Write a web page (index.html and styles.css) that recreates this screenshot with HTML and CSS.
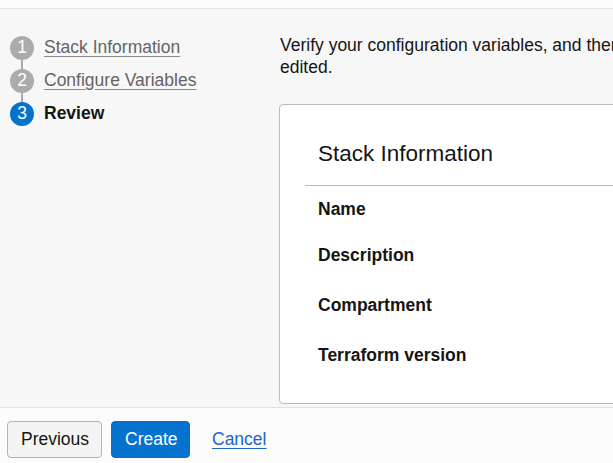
FILE: index.html
```html
<!DOCTYPE html>
<html>
<head>
<meta charset="utf-8">
<link rel="stylesheet" href="styles.css">
</head>
<body>
<div class="topbar"></div>
<div class="main">
  <nav class="steps">
    <div class="step done">
      <span class="num">1</span>
      <a class="label" href="#">Stack Information</a>
    </div>
    <div class="step done">
      <span class="num">2</span>
      <a class="label" href="#">Configure Variables</a>
    </div>
    <div class="step active">
      <span class="num">3</span>
      <span class="label">Review</span>
    </div>
  </nav>
  <section class="content">
    <p class="intro"><span class="line">Verify your configuration variables, and then click Create. Stack information can't be</span><br>edited.</p>
    <div class="card">
      <h2 class="card-title">Stack Information</h2>
      <div class="divider"></div>
      <dl class="fields">
        <dt class="f-name">Name</dt>
        <dt class="f-desc">Description</dt>
        <dt class="f-comp">Compartment</dt>
        <dt class="f-tf">Terraform version</dt>
      </dl>
    </div>
  </section>
</div>
<footer class="footer">
  <button class="btn btn-secondary">Previous</button>
  <button class="btn btn-primary">Create</button>
  <a class="cancel" href="#">Cancel</a>
</footer>
</body>
</html>
```

FILE: styles.css
```css
* { box-sizing: border-box; }
html, body {
  margin: 0;
  padding: 0;
  height: 100%;
  overflow: hidden;
}
body {
  font-family: "Liberation Sans", Arial, sans-serif;
  font-size: 17.5px;
  color: #161513;
  background: #f7f7f7;
  display: flex;
  flex-direction: column;
  width: 613px;
  height: 463px;
}
.topbar {
  height: 9px;
  flex: none;
  background: #fbfbfb;
  border-bottom: 1px solid #e2e2e2;
}
.main {
  flex: none;
  height: 398px;
  display: flex;
  overflow: hidden;
  background: #f7f7f7;
}
.steps {
  width: 279px;
  flex: none;
  padding: 22px 0 0 10px;
}
.step {
  height: 33px;
  display: flex;
  align-items: center;
  gap: 10px;
  position: relative;
}
.step + .step::before {
  content: "";
  position: absolute;
  left: 11px;
  top: -10px;
  width: 2px;
  height: 20px;
  background: #ababab;
}
.num {
  width: 24px;
  height: 24px;
  border-radius: 50%;
  background: #ababab;
  color: #fff;
  display: flex;
  align-items: center;
  justify-content: center;
  font-size: 17.5px;
  line-height: 1;
  position: relative;
  z-index: 1;
}
.step .label {
  color: #646464;
  text-decoration: underline;
  text-decoration-color: #8a8a8a;
  text-underline-offset: 3px;
  white-space: nowrap;
}
.step.active .num { background: #0572ce; }
.step.active .label {
  color: #161513;
  font-weight: bold;
  text-decoration: none;
}
.content {
  flex: none;
  width: 620px;
  padding-top: 25px;
}
.intro {
  margin: 0 0 26px 1px;
  line-height: 22px;
  white-space: nowrap;
}
.card {
  width: 600px;
  height: 300px;
  background: #fff;
  border: 1px solid #b9bbc2;
  border-radius: 4px;
  padding: 35px 0 0 0;
}
.card-title {
  margin: 0 0 0 38px;
  font-size: 22.5px;
  font-weight: normal;
  line-height: 28px;
}
.divider {
  margin: 17px 0 0 25px;
  height: 1px;
  background: #b6b8c0;
}
.fields {
  margin: 0 0 0 38px;
  padding: 0;
}
.fields dt {
  font-weight: bold;
  line-height: 22px;
}
.f-name { margin-top: 12px; }
.f-desc { margin-top: 24px; }
.f-comp { margin-top: 28px; }
.f-tf { margin-top: 28px; }
.footer {
  flex: 1;
  background: #fcfcfc;
  border-top: 1px solid #e2e2e2;
  display: flex;
  align-items: flex-start;
  padding: 13px 0 0 7px;
}
.btn {
  font-family: inherit;
  font-size: 17.5px;
  height: 37px;
  border-radius: 4px;
  padding: 0 13px;
  cursor: pointer;
}
.btn-secondary {
  background: #f4f4f4;
  border: 1px solid #b3b3b3;
  color: #161513;
  width: 95px;
}
.btn-primary {
  margin-left: 9px;
  background: #0572ce;
  border: 1px solid #0572ce;
  color: #fff;
  width: 79px;
}
.cancel {
  margin-left: 22px;
  line-height: 37px;
  color: #1a66c8;
  text-decoration: underline;
  text-underline-offset: 3px;
}
```
